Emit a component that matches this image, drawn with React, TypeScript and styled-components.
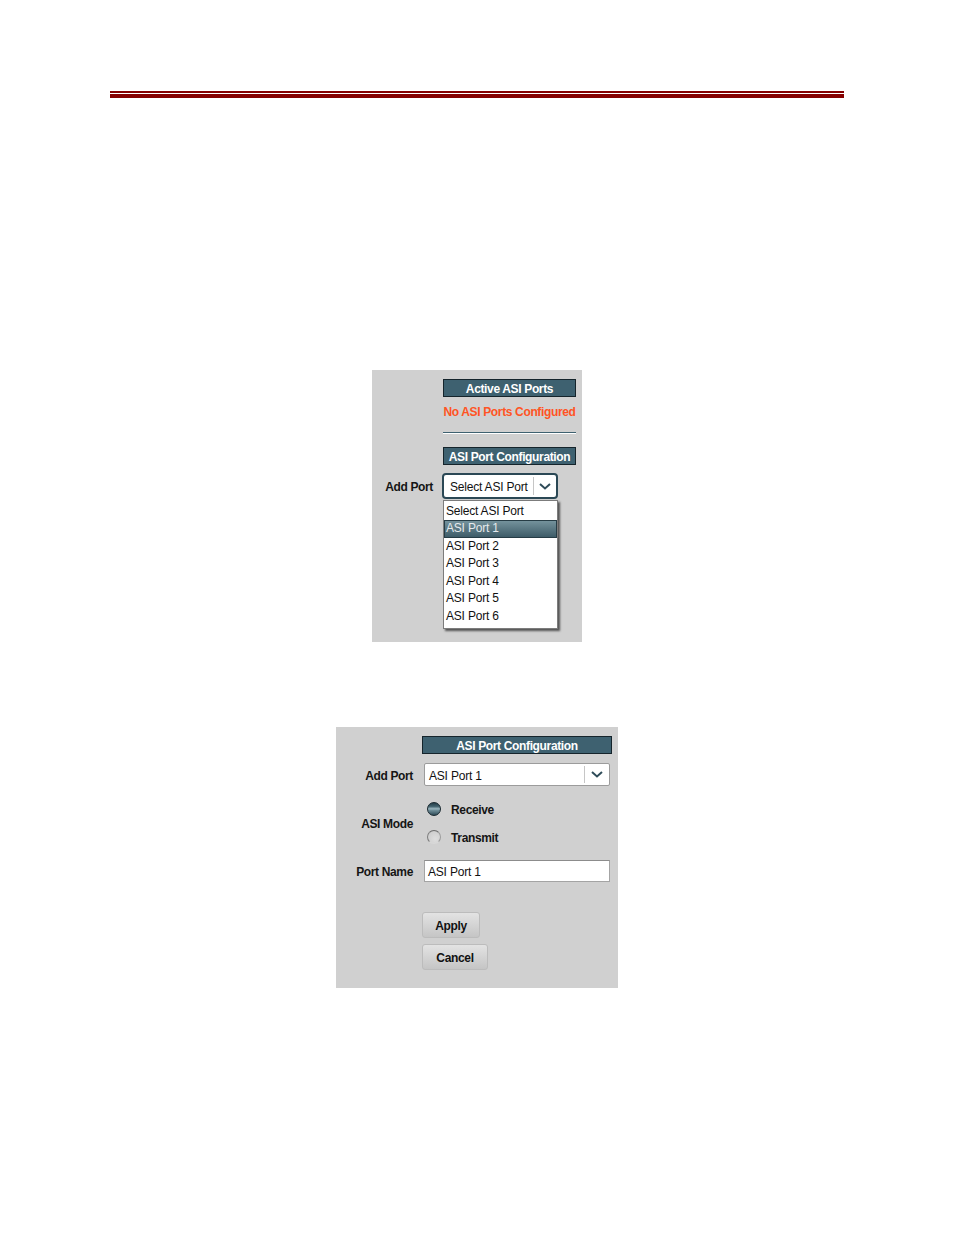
import styled, { createGlobalStyle, css } from 'styled-components';

const GlobalStyle = createGlobalStyle`
  body {
    margin: 0;
    background: #ffffff;
    font-family: "Liberation Sans", Arial, sans-serif;
  }
`;

const Page = styled.div({
  width: 954,
  minHeight: 1235,
  display: 'flex',
  flexDirection: 'column',
  alignItems: 'center',
  background: '#ffffff',
});

const TopRule = styled.div({
  alignSelf: 'flex-start',
  marginLeft: 110,
  marginTop: 91,
  width: 734,
  height: 1,
  borderTop: '2px solid #850000',
  borderBottom: '4px solid #850000',
});

interface PanelProps {
  $width: number;
  $label: number;
  $gap: number;
  $top: number;
  $bottom: number;
}

const Panel = styled.div<PanelProps>`
  --label: ${(p) => p.$label}px;
  --gap: ${(p) => p.$gap}px;
  width: ${(p) => p.$width}px;
  margin-top: ${(p) => p.$top}px;
  padding: 9px 6px ${(p) => p.$bottom}px 0;
  box-sizing: border-box;
  background: #d0d0d0;
  display: flex;
  flex-direction: column;
`;

const Row = styled.div<{ $mt?: number }>`
  display: grid;
  grid-template-columns: var(--label) 1fr;
  column-gap: var(--gap);
  align-items: center;
  margin-top: ${(p) => p.$mt ?? 0}px;
`;

const boldText = css`
  font-size: 12px;
  font-weight: bold;
  letter-spacing: -0.35px;
`;

const Label = styled.div`
  ${boldText};
  grid-column: 1;
  padding-top: 2px;
  text-align: right;
  color: #151515;
  white-space: nowrap;
`;

const Cell = styled.div`
  grid-column: 2;
  display: flex;
  flex-direction: column;
  align-items: flex-start;
`;

const SectionHeader = styled.div`
  ${boldText};
  box-sizing: border-box;
  width: 100%;
  height: 18px;
  padding-top: 1px;
  line-height: 16px;
  text-align: center;
  color: #ffffff;
  background: #3e6170;
  border: 1px solid #15242b;
  overflow: hidden;
`;

const Warning = styled.div`
  ${boldText};
  width: 100%;
  line-height: 14px;
  text-align: center;
  color: #ff5424;
  white-space: nowrap;
`;

const Separator = styled.div({
  width: '100%',
  height: 1,
  background: '#3e6170',
  borderBottom: '1px solid #ffffff',
});

const SelectBox = styled.div<{ $focused?: boolean; $width: number; $height: number; $shift: number }>`
  box-sizing: border-box;
  width: ${(p) => p.$width}px;
  height: ${(p) => p.$height}px;
  margin-left: ${(p) => p.$shift}px;
  display: flex;
  align-items: stretch;
  background: #ffffff;
  border: ${(p) => (p.$focused ? '2px solid #2b4855' : '1px solid #9c9c9c')};
  border-radius: ${(p) => (p.$focused ? 4 : 2)}px;
`;

const SelectValue = styled.div<{ $pad: number }>`
  flex: 1;
  display: flex;
  align-items: center;
  padding-left: ${(p) => p.$pad}px;
  padding-top: 2px;
  font-size: 12px;
  letter-spacing: -0.2px;
  color: #111111;
  white-space: nowrap;
`;

const SelectArrow = styled.div<{ $width: number }>`
  width: ${(p) => p.$width}px;
  display: flex;
  align-items: center;
  justify-content: center;
  border-left: 1px solid #c6c6c6;
  margin: 2px 0;
`;

const ListBox = styled.div({
  boxSizing: 'border-box',
  width: 115,
  marginTop: 1,
  padding: '1.5px 0 3px',
  background: '#ffffff',
  border: '1px solid #7c7c7c',
  boxShadow: '2px 2px 2px rgba(0, 0, 0, 0.6)',
});

const ListItem = styled.div<{ $active?: boolean }>`
  box-sizing: border-box;
  height: 17.5px;
  line-height: 17.5px;
  padding-left: 2px;
  font-size: 12px;
  letter-spacing: -0.2px;
  white-space: nowrap;
  color: #111111;
  ${(p) => p.$active && css`
    color: #e6eaec;
    line-height: 15.5px;
    background: linear-gradient(#74929c, #3e5c68);
    border: 1px solid #263c45;
    padding-left: 1px;
  `}
`;

const RadioGroup = styled.div({
  display: 'flex',
  flexDirection: 'column',
  gap: 8,
  paddingLeft: 5,
});

const RadioOption = styled.label({
  display: 'flex',
  alignItems: 'center',
  gap: 10,
  height: 20,
});

const RadioDot = styled.span<{ $checked?: boolean }>`
  box-sizing: border-box;
  width: 14px;
  height: 14px;
  border-radius: 50%;
  ${(p) => (p.$checked
    ? css`
      background: linear-gradient(#263f4a 0%, #3f5f6b 28%, #9ab5be 48%, #6d8c97 62%, #2f4c58 100%);
      border: 1px solid #17272e;
    `
    : css`
      background: radial-gradient(circle at 60% 65%, #dedede 0%, #cfcfcf 70%);
      border: 1.5px solid;
      border-color: #6c6c6c #9c9c9c #d8d8d8 #7c7c7c;
    `)}
`;

const RadioText = styled.span`
  ${boldText};
  padding-top: 2px;
  color: #151515;
`;

const TextInput = styled.div({
  boxSizing: 'border-box',
  width: 186,
  height: 22,
  marginLeft: 2,
  padding: '2px 0 0 3px',
  display: 'flex',
  alignItems: 'center',
  background: '#ffffff',
  border: '1px solid #a4a4a4',
  borderTopColor: '#8c8c8c',
  fontSize: 12,
  letterSpacing: '-0.2px',
  color: '#111111',
});

const Button = styled.button<{ $width: number; $mt?: number }>`
  ${boldText};
  box-sizing: border-box;
  width: ${(p) => p.$width}px;
  height: 26px;
  margin-top: ${(p) => p.$mt ?? 0}px;
  padding: 2px 0 0;
  font-family: inherit;
  color: #111111;
  background: linear-gradient(#e3e3e3, #c5c5c5);
  border: 1px solid #bcbcbc;
  border-radius: 3px;
`;

function Chevron() {
  return (
    <svg width="12" height="7" viewBox="0 0 12 7" fill="none">
      <polyline points="1,1 6,5.5 11,1" stroke="#2f4c59" strokeWidth="2" />
    </svg>
  );
}

const ports = ['ASI Port 1', 'ASI Port 2', 'ASI Port 3', 'ASI Port 4', 'ASI Port 5', 'ASI Port 6'];

export default function App() {
  return (
    <Page>
      <GlobalStyle />
      <TopRule />

      <Panel $width={210} $label={61} $gap={10} $top={272} $bottom={13}>
        <Row>
          <Cell><SectionHeader>Active ASI Ports</SectionHeader></Cell>
        </Row>
        <Row $mt={8}>
          <Cell><Warning>No ASI Ports Configured</Warning></Cell>
        </Row>
        <Row $mt={13}>
          <Cell><Separator /></Cell>
        </Row>
        <Row $mt={13}>
          <Cell><SectionHeader>ASI Port Configuration</SectionHeader></Cell>
        </Row>
        <Row $mt={8}>
          <Label>Add Port</Label>
          <Cell>
            <SelectBox $focused $width={116} $height={26} $shift={-1}>
              <SelectValue $pad={6}>Select ASI Port</SelectValue>
              <SelectArrow $width={22}><Chevron /></SelectArrow>
            </SelectBox>
          </Cell>
        </Row>
        <Row>
          <Cell>
            <ListBox>
              <ListItem>Select ASI Port</ListItem>
              {ports.map((port, i) => (
                <ListItem key={port} $active={i === 0}>{port}</ListItem>
              ))}
            </ListBox>
          </Cell>
        </Row>
      </Panel>

      <Panel $width={282} $label={77} $gap={9} $top={85} $bottom={18}>
        <Row>
          <Cell><SectionHeader>ASI Port Configuration</SectionHeader></Cell>
        </Row>
        <Row $mt={9}>
          <Label>Add Port</Label>
          <Cell>
            <SelectBox $width={186} $height={23} $shift={2}>
              <SelectValue $pad={4}>ASI Port 1</SelectValue>
              <SelectArrow $width={24}><Chevron /></SelectArrow>
            </SelectBox>
          </Cell>
        </Row>
        <Row $mt={13}>
          <Label>ASI Mode</Label>
          <Cell>
            <RadioGroup>
              <RadioOption>
                <RadioDot $checked />
                <RadioText>Receive</RadioText>
              </RadioOption>
              <RadioOption>
                <RadioDot />
                <RadioText>Transmit</RadioText>
              </RadioOption>
            </RadioGroup>
          </Cell>
        </Row>
        <Row $mt={13}>
          <Label>Port Name</Label>
          <Cell><TextInput>ASI Port 1</TextInput></Cell>
        </Row>
        <Row $mt={30}>
          <Cell><Button $width={58}>Apply</Button></Cell>
        </Row>
        <Row>
          <Cell><Button $width={66} $mt={6}>Cancel</Button></Cell>
        </Row>
      </Panel>
    </Page>
  );
}
